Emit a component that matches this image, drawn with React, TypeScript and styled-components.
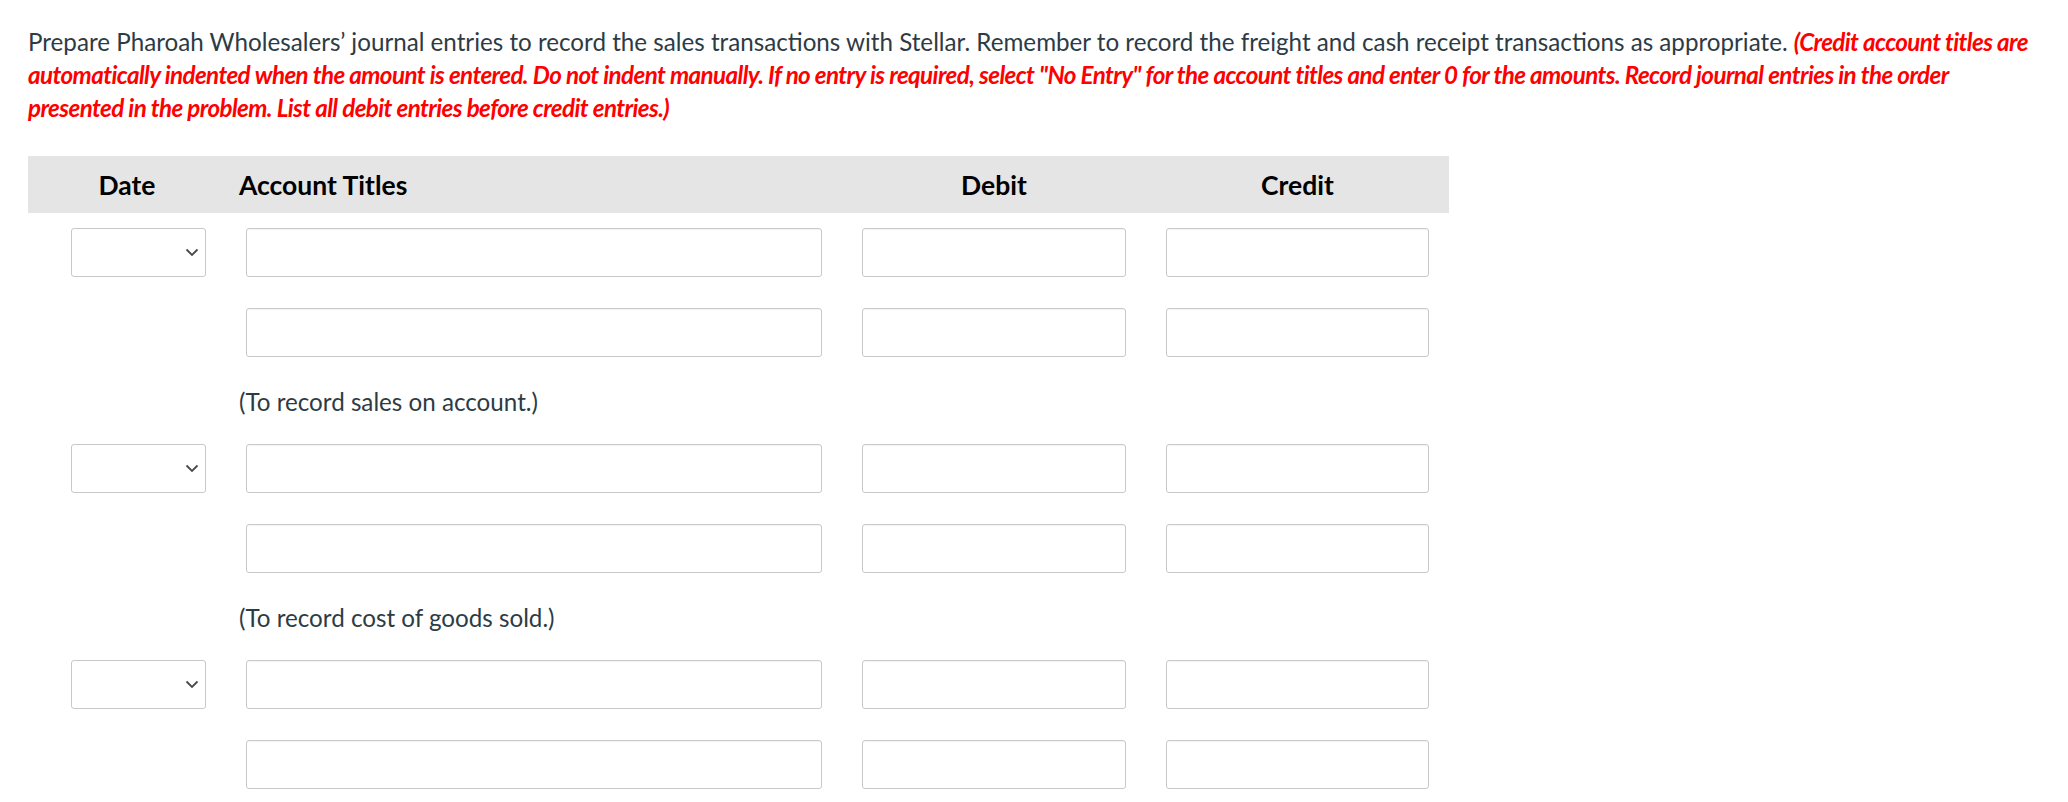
import React from 'react';
import styled, { createGlobalStyle } from 'styled-components';

const GlobalStyle = createGlobalStyle`
  body {
    margin: 0;
    background: #fff;
    font-family: Lato, "Open Sans", sans-serif;
  }
`;

const Page = styled.div`
  padding: 25px 20px 0 28px;
`;

const Prompt = styled.p`
  margin: 0 0 32px;
  font-size: 24.2px;
  line-height: 33px;
  color: #2d3b45;
`;

const Instruction = styled.span`
  color: #f00;
  font-weight: 700;
  font-style: italic;
  letter-spacing: -0.6px;
`;

const Journal = styled.div`
  display: grid;
  grid-template-columns: 198px 616px 304px 303px;
  width: 1421px;
`;

const HeaderCell = styled.div<{ $align?: 'left' | 'center' }>`
  height: 57px;
  display: flex;
  align-items: center;
  justify-content: ${(p) => (p.$align === 'left' ? 'flex-start' : 'center')};
  padding-left: ${(p) => (p.$align === 'left' ? '13px' : '0')};
  background: #e5e5e5;
  color: #000;
  font-size: 26.5px;
  font-weight: 700;
`;

const Cell = styled.div<{ $end?: boolean }>`
  display: flex;
  justify-content: ${(p) => (p.$end ? 'flex-end' : 'stretch')};
  padding: 15px 20px 16px;
  box-sizing: border-box;
  height: 80px;
`;

const Field = styled.input`
  width: 100%;
  height: 49px;
  box-sizing: border-box;
  border: 1px solid #c9c9c9;
  border-radius: 3px;
  box-shadow: inset 0 1px 1px rgba(0, 0, 0, 0.04);
  background: #fff;
  font: inherit;
  outline: none;
`;

const SelectWrap = styled.div`
  position: relative;
  width: 135px;
  height: 49px;
`;

const DateSelect = styled.select`
  width: 100%;
  height: 100%;
  box-sizing: border-box;
  border: 1px solid #c9c9c9;
  border-radius: 3px;
  background: #fff;
  appearance: none;
  font: inherit;
  outline: none;
`;

const Chevron = styled.svg`
  position: absolute;
  right: 7px;
  top: 20px;
  pointer-events: none;
`;

const Memo = styled.div`
  grid-column: 2 / -1;
  height: 56px;
  display: flex;
  align-items: center;
  padding-left: 13px;
  font-size: 24.2px;
  color: #2d3b45;
`;

const Spacer = styled.div``;

const DateField = () => (
  <SelectWrap>
    <DateSelect defaultValue="">
      <option value=""></option>
    </DateSelect>
    <Chevron width="14" height="9" viewBox="0 0 14 9">
      <path d="M1.5 1.5 L7 7 L12.5 1.5" fill="none" stroke="#4a4a4a" strokeWidth="1.8" />
    </Chevron>
  </SelectWrap>
);

const EntryLine = ({ first }: { first?: boolean }) => (
  <>
    <Cell $end>{first ? <DateField /> : null}</Cell>
    <Cell><Field /></Cell>
    <Cell><Field /></Cell>
    <Cell><Field /></Cell>
  </>
);

const entries = [
  '(To record sales on account.)',
  '(To record cost of goods sold.)',
  '',
];

export default function App() {
  return (
    <>
      <GlobalStyle />
      <Page>
        <Prompt>
          Prepare Pharoah Wholesalers’ journal entries to record the sales transactions with Stellar. Remember to record
          the freight and cash receipt transactions as appropriate.{' '}
          <Instruction>
            (Credit account titles are automatically indented when the amount is entered. Do not indent manually. If no
            entry is required, select "No Entry" for the account titles and enter 0 for the amounts. Record journal
            entries in the order presented in the problem. List all debit entries before credit entries.)
          </Instruction>
        </Prompt>
        <Journal>
          <HeaderCell>Date</HeaderCell>
          <HeaderCell $align="left">Account Titles</HeaderCell>
          <HeaderCell>Debit</HeaderCell>
          <HeaderCell>Credit</HeaderCell>
          {entries.map((memo, i) => (
            <React.Fragment key={i}>
              <EntryLine first />
              <EntryLine />
              {memo ? (
                <>
                  <Spacer />
                  <Memo>{memo}</Memo>
                </>
              ) : null}
            </React.Fragment>
          ))}
        </Journal>
      </Page>
    </>
  );
}
